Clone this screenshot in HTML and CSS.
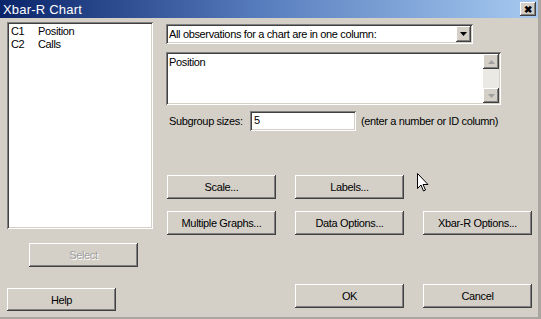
FILE: index.html
```html
<!DOCTYPE html>
<html lang="en">
<head>
    <meta charset="UTF-8">
    <title>Xbar-R Chart</title>
    <link rel="stylesheet" href="styles.css">
</head>
<body>
    <div class="window">
        <div class="titlebar">
            <span class="title">Xbar-R Chart</span>
            <span class="close-btn">&#x2716;</span>
        </div>
        <div class="dialog">
            <div class="left-col">
                <div class="var-list sunken">
                    <div class="var-row"><span class="col-id">C1</span>Position</div>
                    <div class="var-row"><span class="col-id">C2</span>Calls</div>
                </div>
                <button class="btn select-btn" disabled>Select</button>
                <button class="btn help-btn">Help</button>
            </div>
            <div class="right-col">
                <div class="combo sunken">
                    <span class="combo-text">All observations for a chart are in one column:</span>
                    <span class="combo-arrow raised">
                        <svg width="7" height="4" viewBox="0 0 7 4"><path d="M0 0h7L3.5 4z" fill="#000"/></svg>
                    </span>
                </div>
                <div class="memo sunken">
                    <span class="memo-text">Position</span>
                    <div class="scrollbar">
                        <span class="scroll-btn raised">
                            <svg width="7" height="4" viewBox="0 0 7 4"><path d="M0 4h7L3.5 0z" fill="#a0a0a0"/></svg>
                        </span>
                        <span class="scroll-btn raised">
                            <svg width="7" height="4" viewBox="0 0 7 4"><path d="M0 0h7L3.5 4z" fill="#a0a0a0"/></svg>
                        </span>
                    </div>
                </div>
                <div class="subgroup-row">
                    <span class="label">Subgroup sizes:</span>
                    <span class="text-input sunken">5</span>
                    <span class="hint">(enter a number or ID column)</span>
                </div>
                <div class="btn-row row-one">
                    <button class="btn">Scale...</button>
                    <button class="btn">Labels...</button>
                </div>
                <div class="btn-row row-two">
                    <button class="btn">Multiple Graphs...</button>
                    <button class="btn">Data Options...</button>
                    <button class="btn">Xbar-R Options...</button>
                </div>
                <div class="btn-row row-bottom">
                    <button class="btn">OK</button>
                    <button class="btn">Cancel</button>
                </div>
            </div>
        </div>
        <!-- mouse pointer left in the shot -->
        <svg class="cursor" width="12" height="19" viewBox="0 0 12 19">
            <path d="M0.5 0.5v15l3.5-3.5 2.5 6 2-1-2.5-5.5h5z" fill="#fff" stroke="#000" stroke-width="1"/>
        </svg>
    </div>
</body>
</html>
```

FILE: styles.css
```css
body {
    margin: 0;
    padding: 0;
    background-color: #d4d0c8;
    font-family: "Liberation Sans", Arial, sans-serif;
    font-size: 11px;
    letter-spacing: -0.35px;
    color: #000;
}
.window {
    position: relative;
    width: 538px;
    height: 317px;
    background-color: #d4d0c8;
    border-right: 3px solid #a9a69f;
    border-bottom: 2px solid #a9a69f;
}
.titlebar {
    height: 18px;
    display: flex;
    align-items: center;
    justify-content: space-between;
    padding: 0 2px 0 3px;
    background: linear-gradient(to right, #0a246a, #5a7fbf 50%, #a6caf0);
}
.title {
    color: #fff;
    font-size: 13px;
    letter-spacing: 0.2px;
}
.close-btn {
    width: 16px;
    height: 14px;
    display: flex;
    align-items: center;
    justify-content: center;
    background: #d4d0c8;
    font-size: 10px;
    font-weight: bold;
    letter-spacing: 0;
    box-shadow: inset -1px -1px #404040, inset 1px 1px #fff, inset -2px -2px #808080;
}
.sunken {
    background: #fff;
    box-shadow: inset 1px 1px #808080, inset -1px -1px #fff, inset 2px 2px #404040, inset -2px -2px #d4d0c8;
}
.raised {
    background: #d4d0c8;
    box-shadow: inset -1px -1px #404040, inset 1px 1px #fff, inset -2px -2px #808080;
}
.dialog {
    display: flex;
    padding: 4px 0 0 7px;
}
.left-col {
    width: 146px;
    display: flex;
    flex-direction: column;
}
.var-list {
    height: 207px;
    padding: 3px 0 0 4px;
    box-sizing: border-box;
}
.var-row {
    height: 13px;
    line-height: 13px;
}
.col-id {
    display: inline-block;
    width: 27px;
}
.btn {
    width: 109px;
    height: 24px;
    padding: 0;
    border: none;
    background: #d4d0c8;
    font-family: inherit;
    font-size: 11px;
    letter-spacing: -0.35px;
    color: #000;
    box-shadow: inset -1px -1px #404040, inset 1px 1px #fff, inset -2px -2px #808080;
}
.btn:disabled {
    color: #a0a0a0;
    text-shadow: 1px 1px #fff;
}
.select-btn {
    margin: 14px 0 0 22px;
}
.help-btn {
    margin-top: 21px;
    height: 23px;
}
.right-col {
    margin-left: 13px;
    display: flex;
    flex-direction: column;
}
.combo {
    width: 307px;
    height: 20px;
    margin-top: 2px;
    display: flex;
    align-items: center;
    justify-content: space-between;
    padding: 0 2px 0 3px;
    box-sizing: border-box;
}
.combo-arrow {
    width: 15px;
    height: 16px;
    display: flex;
    align-items: center;
    justify-content: center;
}
.memo {
    width: 335px;
    height: 53px;
    margin-top: 8px;
    display: flex;
    justify-content: space-between;
    padding: 4px 2px 2px 3px;
    box-sizing: border-box;
}
.scrollbar {
    width: 16px;
    margin-top: -2px;
    display: flex;
    flex-direction: column;
    justify-content: space-between;
    background: #ebe9e4;
}
.scroll-btn {
    height: 15px;
    display: flex;
    align-items: center;
    justify-content: center;
}
.subgroup-row {
    display: flex;
    align-items: center;
    margin-top: 6px;
    height: 20px;
}
.label {
    margin-left: 3px;
    width: 81px;
}
.text-input {
    width: 106px;
    height: 20px;
    padding: 3px 0 0 4px;
    box-sizing: border-box;
}
.hint {
    margin-left: 5px;
}
.btn-row {
    display: flex;
    gap: 19px;
    margin-left: 1px;
}
.row-one {
    margin-top: 44px;
}
.row-two {
    margin-top: 12px;
}
.row-bottom {
    margin-top: 49px;
    margin-left: 129px;
}
.cursor {
    position: absolute;
    left: 417px;
    top: 173px;
}
```
